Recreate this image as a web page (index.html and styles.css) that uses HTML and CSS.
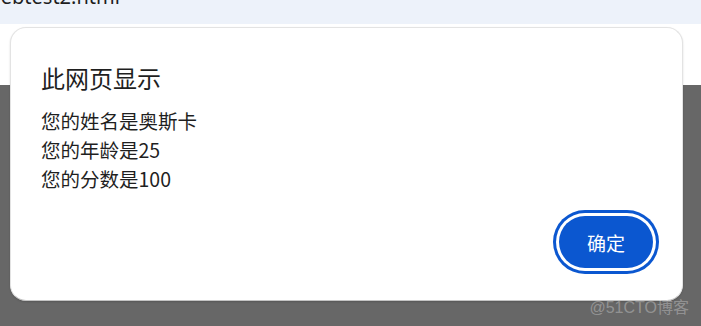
FILE: index.html
```html
<!DOCTYPE html>
<html lang="zh-CN">
<head>
    <meta charset="UTF-8">
    <meta name="viewport" content="width=device-width, initial-scale=1.0">
    <title>webtest2.html</title>
    <link rel="stylesheet" href="styles.css">
</head>
<body>
    <div class="page">
        <div class="tab-bar">
            <span class="tab-title">webtest2.html</span>
        </div>
        <div class="toolbar"></div>
        <div class="backdrop"></div>
    </div>

    <div class="alert-dialog">
        <h1 class="alert-title">此网页显示</h1>
        <div class="alert-message">
            <p>您的姓名是奥斯卡</p>
            <p>您的年龄是25</p>
            <p>您的分数是100</p>
        </div>
        <div class="alert-actions">
            <button class="ok-btn">确定</button>
        </div>
    </div>

    <div class="watermark">@51CTO博客</div>
</body>
</html>
```

FILE: styles.css
```css
* {
    margin: 0;
    padding: 0;
    box-sizing: border-box;
}

html, body {
    width: 701px;
    height: 326px;
    overflow: hidden;
}

body {
    font-family: "Noto Sans CJK SC", "Noto Sans", sans-serif;
    color: #1f1f1f;
    background: #676767;
    position: relative;
}

.page {
    display: flex;
    flex-direction: column;
    height: 100%;
}

.tab-bar {
    height: 24px;
    background: #edf2fa;
    overflow: hidden;
    display: flex;
    align-items: flex-end;
}

.tab-title {
    font-family: "Noto Sans", sans-serif;
    font-size: 20px;
    line-height: 20px;
    color: #1f1f1f;
    margin-left: -15px;
    margin-bottom: 17px;
    white-space: nowrap;
}

.toolbar {
    height: 61px;
    background: #ffffff;
}

.backdrop {
    flex: 1;
    background: #676767;
}

.alert-dialog {
    position: absolute;
    left: 10px;
    top: 27px;
    width: 673px;
    height: 274px;
    background: #ffffff;
    border: 1px solid #e3e3e3;
    border-bottom-color: #c4c4c4;
    border-radius: 16px;
    box-shadow: 0 1px 2px rgba(0, 0, 0, 0.15);
    padding: 35px 29px 32px 30px;
    display: flex;
    flex-direction: column;
}

.alert-title {
    font-size: 24px;
    font-weight: 400;
    line-height: 29px;
}

.alert-message {
    margin-top: 14px;
    font-size: 19.5px;
    line-height: 29px;
}

.alert-actions {
    margin-top: auto;
    display: flex;
    justify-content: flex-end;
}

.ok-btn {
    width: 94px;
    height: 52px;
    border: none;
    border-radius: 26px;
    background: #0b57d0;
    color: #ffffff;
    font-family: "Noto Sans CJK SC", sans-serif;
    font-size: 19px;
    box-shadow: 0 0 0 3px #ffffff, 0 0 0 6px #0b57d0;
    cursor: pointer;
}

.watermark {
    position: absolute;
    right: 12px;
    bottom: 9px;
    font-family: "Liberation Sans", "Noto Sans CJK SC", sans-serif;
    font-size: 16px;
    line-height: 18px;
    color: rgba(255, 255, 255, 0.3);
    white-space: nowrap;
}
```
